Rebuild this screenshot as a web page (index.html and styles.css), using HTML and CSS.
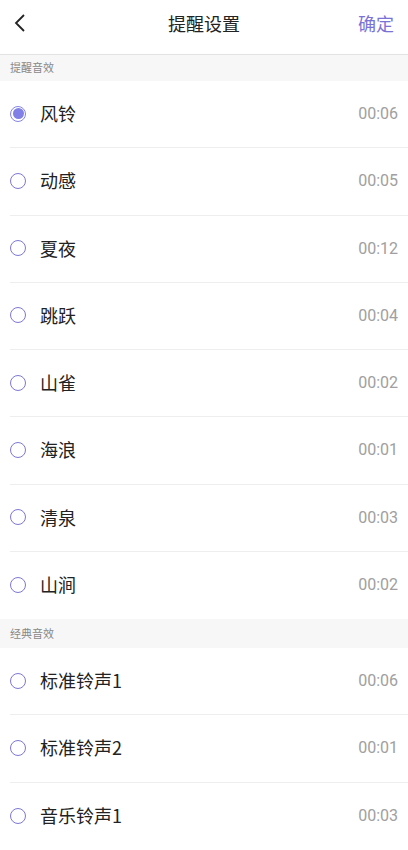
FILE: index.html
```html
<!DOCTYPE html>
<html>
<head>
    <meta charset="utf-8">
    <link rel="stylesheet" href="styles.css">
</head>
<body>
    <div class="topbar">
        <svg class="back" width="14" height="20" viewBox="0 0 14 20">
            <path d="M11 2 L3 10 L11 18" fill="none" stroke="#222" stroke-width="1.8"/>
        </svg>
        <div class="title">提醒设置</div>
        <div class="confirm">确定</div>
    </div>

    <div class="section first">提醒音效</div>
    <div class="list">
        <div class="row selected"><span class="radio"></span><span class="name">风铃</span><span class="time">00:06</span></div>
        <div class="row"><span class="radio"></span><span class="name">动感</span><span class="time">00:05</span></div>
        <div class="row"><span class="radio"></span><span class="name">夏夜</span><span class="time">00:12</span></div>
        <div class="row"><span class="radio"></span><span class="name">跳跃</span><span class="time">00:04</span></div>
        <div class="row"><span class="radio"></span><span class="name">山雀</span><span class="time">00:02</span></div>
        <div class="row"><span class="radio"></span><span class="name">海浪</span><span class="time">00:01</span></div>
        <div class="row"><span class="radio"></span><span class="name">清泉</span><span class="time">00:03</span></div>
        <div class="row"><span class="radio"></span><span class="name">山涧</span><span class="time">00:02</span></div>
    </div>

    <div class="section">经典音效</div>
    <div class="list">
        <div class="row"><span class="radio"></span><span class="name">标准铃声1</span><span class="time">00:06</span></div>
        <div class="row"><span class="radio"></span><span class="name">标准铃声2</span><span class="time">00:01</span></div>
        <div class="row"><span class="radio"></span><span class="name">音乐铃声1</span><span class="time">00:03</span></div>
    </div>
</body>
</html>
```

FILE: styles.css
```css
body {
    margin: 0;
    font-family: "Noto Sans CJK SC", "Noto Sans", sans-serif;
    background-color: #fff;
    color: #222;
}
.topbar {
    height: 54px;
    border-bottom: 1px solid #e2e2e2;
    display: flex;
    align-items: center;
    justify-content: space-between;
    padding: 0 14px 0 13px;
    position: relative;
}
.back {
    display: block;
    margin-top: -8px;
}
.title {
    position: absolute;
    left: 0;
    right: 0;
    top: 0;
    line-height: 46px;
    text-align: center;
    font-size: 18px;
    pointer-events: none;
}
.confirm {
    font-size: 18px;
    color: #7b72d6;
    margin-top: -8px;
}
.section {
    height: 29px;
    line-height: 29px;
    background-color: #f7f7f7;
    color: #888;
    font-size: 11px;
    padding-left: 10px;
}
.section.first {
    height: 26px;
    line-height: 24px;
}
.row {
    height: 67.25px;
    box-sizing: border-box;
    display: flex;
    align-items: center;
    margin-left: 10px;
    padding-right: 10px;
    border-bottom: 1px solid #eeeeee;
}
.list .row:last-child {
    border-bottom: none;
}
.radio {
    width: 16px;
    height: 16px;
    box-sizing: border-box;
    border: 1.3px solid #7d78d4;
    border-radius: 50%;
    margin-top: -1px;
    display: flex;
    align-items: center;
    justify-content: center;
}
.row.selected .radio {
    border-color: #8585e8;
}
.row.selected .radio::after {
    content: "";
    width: 11px;
    height: 11px;
    border-radius: 50%;
    background-color: #8080e6;
}
.name {
    flex: 1;
    margin-left: 14px;
    font-size: 18px;
    margin-top: -2px;
}
.time {
    font-family: Roboto, "Noto Sans", sans-serif;
    font-size: 16px;
    color: #a0a0a0;
    margin-top: -1px;
}
```
